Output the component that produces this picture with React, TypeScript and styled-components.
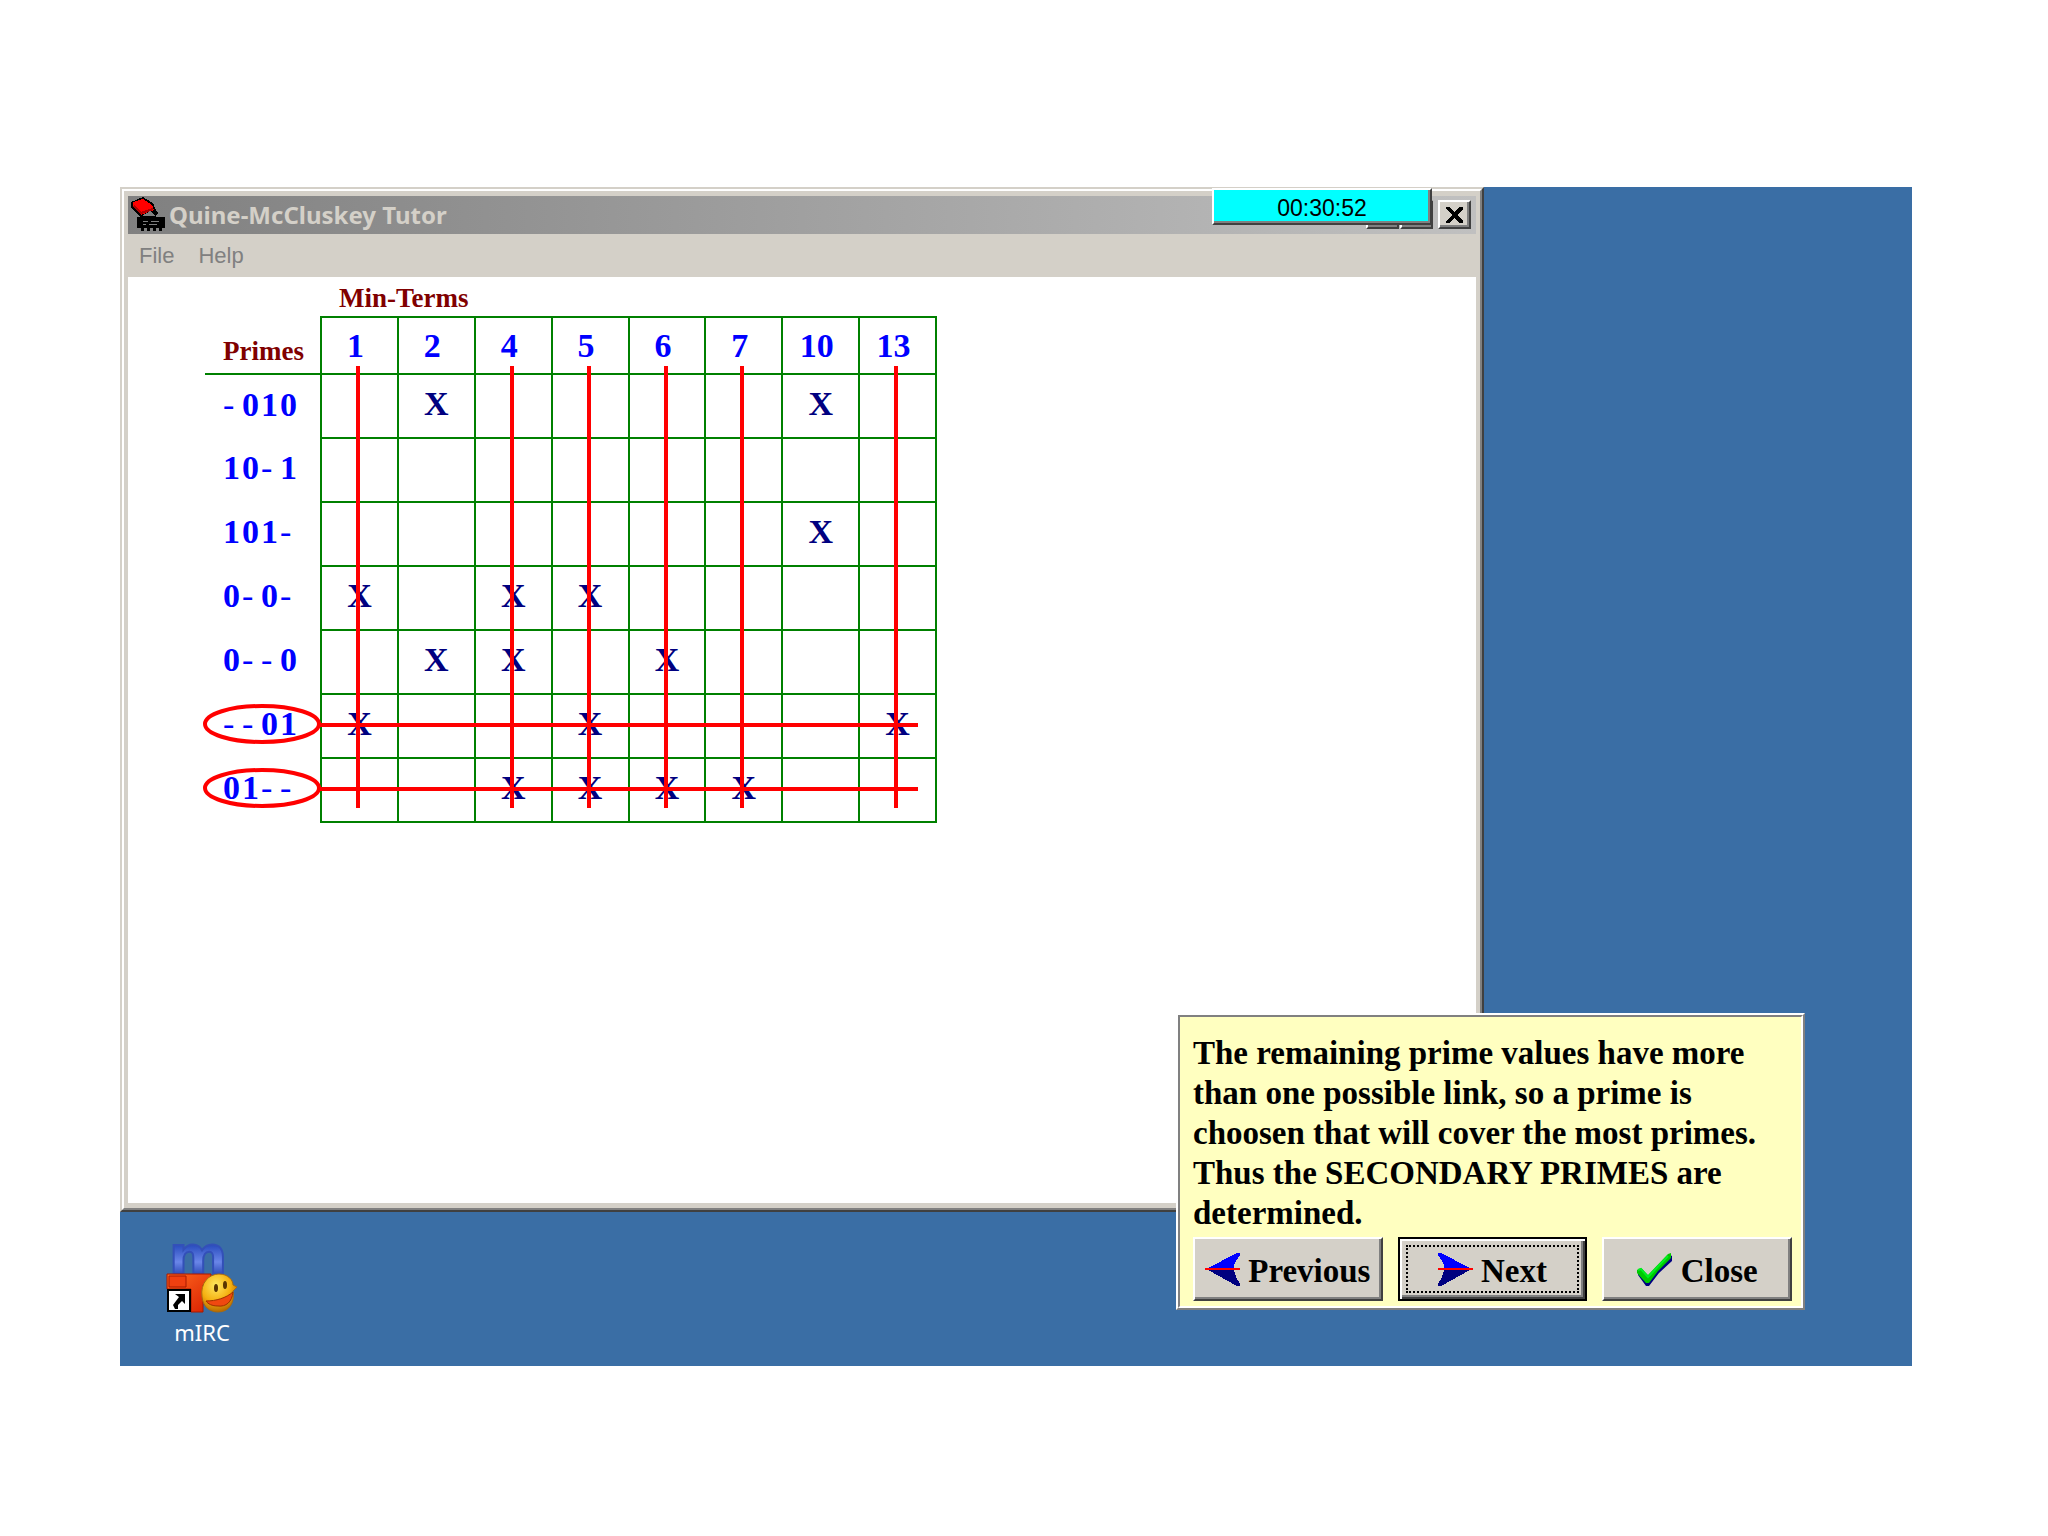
import React from "react";
import styled, { createGlobalStyle, css } from "styled-components";

const FACE = "#d4d0c8";
const SERIF = `"Liberation Serif", "Times New Roman", serif`;
const SANS = `"Liberation Sans", Arial, sans-serif`;
const UI = `"Noto Sans", Tahoma, sans-serif`;

const LABEL_WIDTH = 116;
const TABLE_WIDTH = 732;
const CAPTION_HEIGHT = 39;
const HEAD_HEIGHT = 57;
const ROW_HEIGHT = 64;

const GlobalStyle = createGlobalStyle`
  * { box-sizing: border-box; }
  body { margin: 0; background: #fff; }
`;

const Page = styled.main`
  display: flex;
  min-height: 100vh;
  padding: 187px 136px 170px 120px;
`;

const Desktop = styled.div`
  position: relative;
  display: flex;
  flex: 1;
  flex-direction: column;
  min-width: 0;
  background: #3a6ea5;
`;

const raised = css`
  border: 2px solid;
  border-color: #fff #404040 #404040 #fff;
  box-shadow: inset -2px -2px 0 #808080;
`;

const WindowFrame = styled.section`
  display: flex;
  flex: 1;
  margin-right: 428px;
  border: 2px solid;
  border-color: ${FACE} #404040 #404040 ${FACE};
`;

const WindowInner = styled.div`
  display: flex;
  flex: 1;
  flex-direction: column;
  min-width: 0;
  padding: 5px 4px;
  background: ${FACE};
  border: 2px solid;
  border-color: #fff #808080 #808080 #fff;
`;

const TitleBar = styled.header`
  display: flex;
  align-items: flex-start;
  height: 38px;
  padding: 0 5px 0 3px;
  background: linear-gradient(90deg, #808080, #c0c0c0);
`;

const Title = styled.h1`
  flex: 1;
  margin: 0 0 0 4px;
  color: ${FACE};
  font: 700 24px/38px ${UI};
`;

const Caption = styled.div`
  display: flex;
  gap: 1px;
  padding-top: 4px;
`;

const CaptionButton = styled.button<{ $apart?: boolean }>`
  ${raised}
  display: grid;
  place-items: center;
  width: 33px;
  height: 29px;
  margin-left: ${(p) => (p.$apart ? 4 : 0)}px;
  padding: 0;
  background: ${FACE};
`;

const MenuBar = styled.nav`
  display: flex;
  gap: 24px;
  height: 43px;
  padding: 0 11px;
`;

const MenuItem = styled.button`
  padding: 0;
  border: 0;
  background: none;
  color: #808080;
  font: 22px/42px ${SANS};
`;

const Client = styled.div`
  flex: 1;
  padding: 0 77px;
  background: #fff;
`;

const Chart = styled.div`
  position: relative;
  width: ${TABLE_WIDTH}px;
`;

const ChartTable = styled.table`
  width: 100%;
  table-layout: fixed;
  border-collapse: collapse;
  font-family: ${SERIF};
  font-weight: 700;
`;

const ChartCaption = styled.caption`
  height: ${CAPTION_HEIGHT}px;
  padding-left: 134px;
  color: #800000;
  font-size: 27px;
  line-height: 42px;
  text-align: left;
`;

const LabelCol = styled.col`
  width: ${LABEL_WIDTH}px;
`;

const HeadRow = styled.tr`
  height: ${HEAD_HEIGHT}px;
`;

const Row = styled.tr`
  height: ${ROW_HEIGHT}px;
`;

const PrimesHead = styled.th`
  padding: 12px 0 0 18px;
  border-bottom: 2px solid #008000;
  color: #800000;
  font-size: 27px;
  line-height: 30px;
  text-align: left;
`;

const Term = styled.th`
  padding: 0 8px 0 0;
  border: 2px solid #008000;
  color: #0000ff;
  font-size: 34px;
  line-height: 40px;
`;

const PrimeLabel = styled.th`
  padding: 0 0 4px 18px;
  color: #0000ff;
  font-size: 34px;
  line-height: 40px;
  text-align: left;
`;

const Digits = styled.span`
  display: grid;
  grid-template-columns: repeat(4, 19px);
`;

const Digit = styled.span<{ $dash: boolean }>`
  font-weight: ${(p) => (p.$dash ? 400 : 700)};
`;

const Mark = styled.td`
  padding: 0 0 4px;
  border: 2px solid #008000;
  color: #000080;
  font-size: 34px;
  line-height: 40px;
  text-align: center;
`;

const Strikes = styled.svg`
  position: absolute;
  top: ${CAPTION_HEIGHT}px;
  left: 0;
  overflow: visible;
  pointer-events: none;
`;

const IconRow = styled.div`
  display: flex;
  height: 154px;
  padding: 31px 41px 0;
`;

const Shortcut = styled.a`
  display: flex;
  flex-direction: column;
  align-items: center;
  gap: 2px;
  width: 82px;
  color: #fff;
  font: 22px/34px ${UI};
  text-decoration: none;

  svg {
    flex: none;
    overflow: visible;
  }
`;

const Timer = styled.output`
  ${raised}
  position: absolute;
  top: 1px;
  right: 480px;
  width: 220px;
  height: 37px;
  padding: 2px;
  background: #00ffff;
  color: #000;
  font: 23px/33px ${SANS};
  text-align: center;
`;

const Dialog = styled.aside`
  position: absolute;
  right: 107px;
  bottom: 56px;
  width: 629px;
  border: 2px solid;
  border-color: #fff #808080 #808080 #fff;
`;

const DialogInner = styled.div`
  padding: 16px 9px 5px 13px;
  background: #ffffc0;
  border: 2px solid;
  border-color: #808080 #fff #fff #808080;
`;

const Message = styled.p`
  margin: 0 0 4px;
  color: #000;
  font: 700 33px/40px ${SERIF};
`;

const Actions = styled.div`
  display: flex;
  gap: 15px;
`;

const ActionButton = styled.button<{ $default?: boolean }>`
  flex: 1 1 0;
  height: 64px;
  padding: 6px;
  background: ${FACE};
  color: #000;
  font: 700 33px/40px ${SERIF};
  ${raised}
  ${(p) =>
    p.$default &&
    css`
      border-color: #000;
      box-shadow: inset 2px 2px 0 #fff, inset -2px -2px 0 #404040, inset -4px -4px 0 #808080;
    `}
`;

const ActionFace = styled.span<{ $focused?: boolean }>`
  display: flex;
  align-items: center;
  justify-content: center;
  gap: 8px;
  height: 48px;
  border: ${(p) => (p.$focused ? "2px dotted #000" : "0")};
`;

const ActionLabel = styled.span`
  padding-top: 4px;
`;

const minTerms = ["1", "2", "4", "5", "6", "7", "10", "13"];

const rows = [
  { prime: "-010", covers: ["2", "10"] },
  { prime: "10-1", covers: [] },
  { prime: "101-", covers: ["10"] },
  { prime: "0-0-", covers: ["1", "4", "5"] },
  { prime: "0--0", covers: ["2", "4", "6"] },
  { prime: "--01", covers: ["1", "5", "13"], chosen: true },
  { prime: "01--", covers: ["4", "5", "6", "7"], chosen: true },
];

const struckTerms = ["1", "4", "5", "6", "7", "13"];

function StrikeLines() {
  const height = HEAD_HEIGHT + ROW_HEIGHT * rows.length;
  const pitch = (TABLE_WIDTH - LABEL_WIDTH - 1) / minTerms.length;
  return (
    <Strikes width={TABLE_WIDTH} height={height} fill="none" stroke="#ff0000" strokeWidth={4} aria-hidden="true">
      {struckTerms.map((term) => {
        const x = Math.round(LABEL_WIDTH + pitch * minTerms.indexOf(term) + 37);
        return <line key={term} x1={x} x2={x} y1={50} y2={height - 13} />;
      })}
      {rows.map((row, i) => {
        if (!row.chosen) return null;
        const y = HEAD_HEIGHT + ROW_HEIGHT * i + 32;
        return (
          <g key={row.prime}>
            <ellipse cx={57} cy={y - 1} rx={57} ry={18} />
            <line x1={LABEL_WIDTH - 2} x2={TABLE_WIDTH - 19} y1={y} y2={y} />
          </g>
        );
      })}
    </Strikes>
  );
}

function AppIcon() {
  return (
    <svg width="34" height="36" viewBox="0 0 34 36" shapeRendering="crispEdges" aria-hidden="true">
      <path d="M0 6 12 1 22 7 24 12 27 17 24 22 18 21 9 21 0 11Z" fill="#000" />
      <path d="M2 6 12 3 21 9 23 14 10 19 2 10Z" fill="#ff0000" />
      <path d="M3 10 10 17 22 13" stroke="#b00000" strokeWidth="2" fill="none" />
      <path d="M11 20 19 15 24 20Z" fill="#808080" />
      <path d="M6 21H34V32H31V35H28V32H25V35H22V32H19V35H16V32H13V35H10V32H6Z" fill="#000" />
      <path d="M12 25H17M20 25H28M12 28H15M18 28H26" stroke="#808080" strokeWidth="1" />
    </svg>
  );
}

function CloseGlyph() {
  return (
    <svg width="17" height="16" viewBox="0 0 17 16" shapeRendering="crispEdges" aria-hidden="true">
      <path d="M0 0H4L8.500 5 13 0H17V2L11 8 17 14V16H13L8.500 11 4 16H0V14L6 8 0 2Z" fill="#000" />
    </svg>
  );
}

function ArrowIcon({ left }: { left?: boolean }) {
  return (
    <svg width="35" height="33" viewBox="0 0 35 33" shapeRendering="crispEdges" aria-hidden="true">
      <g transform={left ? "matrix(-1 0 0 1 35 0)" : undefined}>
        <path d="M0 0H3L32 15V17H6V12L4 8 0 2Z" fill="#0000ff" />
        <path d="M6 17H32L3 33H0V31L4 24Z" fill="#000080" />
        <path d="M0 15H35V17H0Z" fill="#ff0000" />
      </g>
    </svg>
  );
}

function CheckIcon() {
  return (
    <svg width="36" height="33" viewBox="0 0 36 33" aria-hidden="true">
      <path d="M1 18 5 16 12 24 33 2 35 3V8L22 20 12 33H9L1 22Z" fill="#000080" />
      <path d="M0 17 4 15 11 22 31 1 34 0V5L21 18 12 30H9L0 20Z" fill="#00c800" />
      <path d="M1 17 4 16 11 24 31 3" stroke="#00f020" strokeWidth="2" fill="none" />
    </svg>
  );
}

function MircIcon() {
  return (
    <svg width="70" height="70" viewBox="0 0 70 70" aria-hidden="true">
      <defs>
        <linearGradient id="mBlue" x1="0" y1="0" x2="0" y2="1">
          <stop offset="0.35" stopColor="#2c4fc0" />
          <stop offset="0.6" stopColor="#6a86e8" />
          <stop offset="0.8" stopColor="#2b49b4" />
        </linearGradient>
        <linearGradient id="blockRed" x1="0" y1="0" x2="1" y2="1">
          <stop offset="0" stopColor="#ff6a20" />
          <stop offset="1" stopColor="#d81e00" />
        </linearGradient>
        <radialGradient id="faceGold" cx="0.4" cy="0.3" r="0.7">
          <stop offset="0" stopColor="#ffe860" />
          <stop offset="0.6" stopColor="#f4b010" />
          <stop offset="1" stopColor="#b86a00" />
        </radialGradient>
      </defs>
      <text x="2" y="32" fontFamily="DejaVu Sans, sans-serif" fontWeight="700" fontSize="56" fill="url(#mBlue)" stroke="#3350b8" strokeWidth="2">m</text>
      <path d="M0 31H44V42H36V69H24V46H0Z" fill="url(#blockRed)" stroke="#a81800" strokeWidth="1" />
      <path d="M2 33H19V44H2Z" fill="#f04010" stroke="#a81800" strokeWidth="1" />
      <path d="M35 54C33 40 42 31 52 31 61 31 66 37 66 42L70 44 66 48C68 60 62 69 51 69 43 69 36 64 35 54Z" fill="url(#faceGold)" stroke="#a86a10" strokeWidth="1" />
      <ellipse cx="49" cy="45" rx="2" ry="4" fill="#5a3400" />
      <ellipse cx="58" cy="42" rx="2" ry="4" fill="#5a3400" />
      <path d="M39 58C49 58 59 55 66 49 65 59 59 64 51 63 45 63 41 61 39 58Z" fill="#f04810" stroke="#a03000" strokeWidth="1" />
      <path d="M0 46H24V69H0Z" fill="#000" />
      <path d="M2 48H22V67H2Z" fill="#fff" />
      <path d="M8 51H18V61L15 58 11 62V66H8L6 62 12 54Z" fill="#000" />
    </svg>
  );
}

export default function App() {
  return (
    <Page>
      <GlobalStyle />
      <Desktop>
        <WindowFrame>
          <WindowInner>
            <TitleBar>
              <AppIcon />
              <Title>Quine-McCluskey Tutor</Title>
              <Caption>
                <CaptionButton aria-label="Minimize" />
                <CaptionButton aria-label="Maximize" />
                <CaptionButton $apart aria-label="Close window">
                  <CloseGlyph />
                </CaptionButton>
              </Caption>
            </TitleBar>
            <MenuBar>
              <MenuItem>File</MenuItem>
              <MenuItem>Help</MenuItem>
            </MenuBar>
            <Client>
              <Chart>
                <ChartTable>
                  <ChartCaption>Min-Terms</ChartCaption>
                  <colgroup>
                    <LabelCol />
                    {minTerms.map((term) => (
                      <col key={term} />
                    ))}
                  </colgroup>
                  <thead>
                    <HeadRow>
                      <PrimesHead scope="col">Primes</PrimesHead>
                      {minTerms.map((term) => (
                        <Term key={term} scope="col">
                          {term}
                        </Term>
                      ))}
                    </HeadRow>
                  </thead>
                  <tbody>
                    {rows.map((row) => (
                      <Row key={row.prime}>
                        <PrimeLabel scope="row">
                          <Digits>
                            {row.prime.split("").map((digit, i) => (
                              <Digit key={i} $dash={digit === "-"}>
                                {digit}
                              </Digit>
                            ))}
                          </Digits>
                        </PrimeLabel>
                        {minTerms.map((term) => (
                          <Mark key={term}>{row.covers.includes(term) ? "X" : ""}</Mark>
                        ))}
                      </Row>
                    ))}
                  </tbody>
                </ChartTable>
                <StrikeLines />
              </Chart>
            </Client>
          </WindowInner>
        </WindowFrame>
        <IconRow>
          <Shortcut href="#mirc">
            <MircIcon />
            mIRC
          </Shortcut>
        </IconRow>
        <Timer>00:30:52</Timer>
        <Dialog>
          <DialogInner>
            <Message>
              The remaining prime values have more than one possible link, so a prime is choosen that will cover the
              most primes. Thus the SECONDARY PRIMES are determined.
            </Message>
            <Actions>
              <ActionButton>
                <ActionFace>
                  <ArrowIcon left />
                  <ActionLabel>Previous</ActionLabel>
                </ActionFace>
              </ActionButton>
              <ActionButton $default>
                <ActionFace $focused>
                  <ArrowIcon />
                  <ActionLabel>Next</ActionLabel>
                </ActionFace>
              </ActionButton>
              <ActionButton>
                <ActionFace>
                  <CheckIcon />
                  <ActionLabel>Close</ActionLabel>
                </ActionFace>
              </ActionButton>
            </Actions>
          </DialogInner>
        </Dialog>
      </Desktop>
    </Page>
  );
}
